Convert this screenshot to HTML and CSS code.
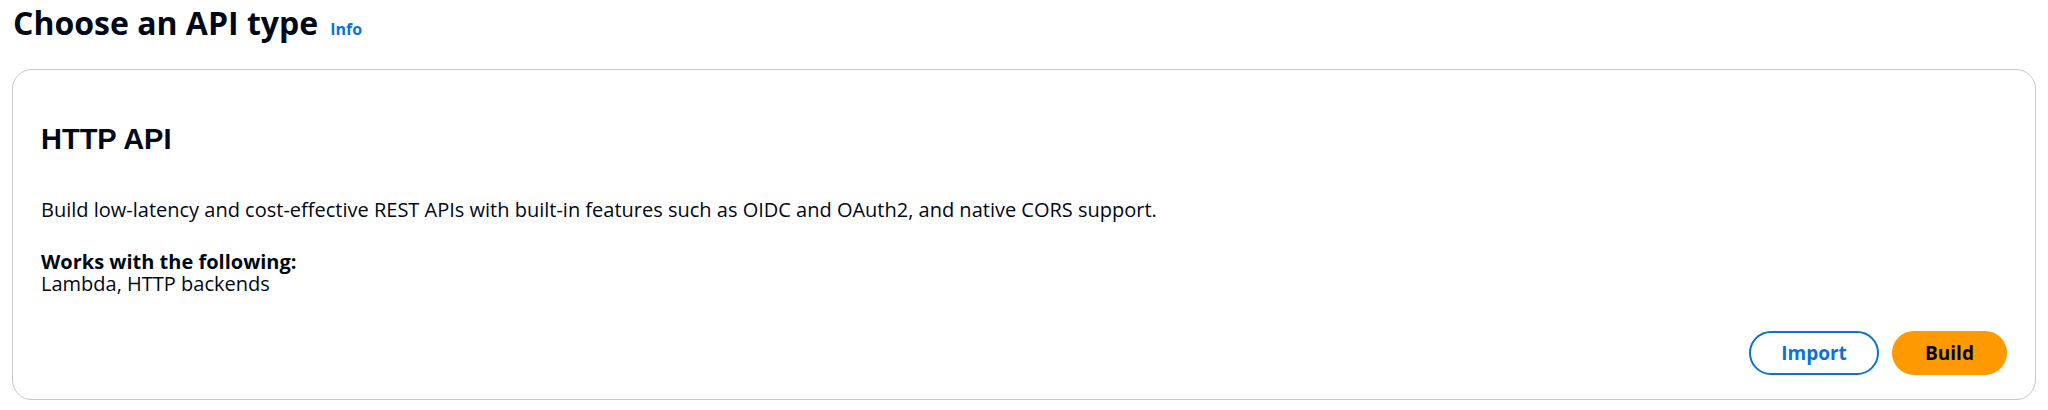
FILE: index.html
```html
<!DOCTYPE html>
<html lang="en">
<head>
<meta charset="utf-8">
<title>Choose an API type</title>
<link rel="stylesheet" href="styles.css">
</head>
<body>
<main class="page">
  <header class="page-header">
    <h1 class="page-title">Choose an API type</h1>
    <a class="info-link" href="#">Info</a>
  </header>
  <section class="card">
    <h2 class="card-title">HTTP API</h2>
    <p class="card-desc">Build low-latency and cost-effective REST APIs with built-in features such as OIDC and OAuth2, and native CORS support.</p>
    <div class="works">
      <div class="works-label">Works with the following:</div>
      <div class="works-value">Lambda, HTTP backends</div>
    </div>
    <div class="actions">
      <button class="btn btn-normal" type="button">Import</button>
      <button class="btn btn-primary" type="button">Build</button>
    </div>
  </section>
</main>
</body>
</html>
```

FILE: styles.css
```css
html, body {
  margin: 0;
  padding: 0;
  background: #ffffff;
}

body {
  font-family: "Open Sans", "Noto Sans", sans-serif;
  color: #000716;
  width: 2048px;
  height: 410px;
  overflow: hidden;
}

.page {
  padding: 3px 12px 0 12px;
  display: flex;
  flex-direction: column;
}

.page-header {
  display: flex;
  align-items: baseline;
  gap: 12px;
  height: 40px;
  padding-left: 1px;
}

.page-title {
  margin: 0;
  font-size: 32px;
  line-height: 40px;
  font-weight: 700;
}

.info-link {
  font-size: 16px;
  font-weight: 700;
  color: #0972d3;
  text-decoration: none;
}

.card {
  margin-top: 26px;
  border: 1px solid #c6c6cd;
  border-radius: 20px;
  padding: 51px 28px 24px 28px;
  display: flex;
  flex-direction: column;
  height: 331px;
  box-sizing: border-box;
}

.card-title {
  margin: 0;
  font-family: "Liberation Sans", Arial, sans-serif;
  font-size: 29px;
  line-height: 36px;
  font-weight: 700;
}

.card-desc {
  margin: 42px 0 0 0;
  font-size: 20px;
  line-height: 22px;
}

.works {
  margin-top: 30px;
  font-size: 20px;
  line-height: 22px;
}

.works-label {
  font-weight: 700;
}

.actions {
  margin-top: auto;
  display: flex;
  justify-content: flex-end;
  gap: 13px;
}

.btn {
  height: 44px;
  border-radius: 22px;
  font-family: "Open Sans", "Noto Sans", sans-serif;
  font-size: 19px;
  font-weight: 700;
  cursor: pointer;
  box-sizing: border-box;
}

.btn-normal {
  width: 130px;
  background: #ffffff;
  color: #0972d3;
  border: 2px solid #0972d3;
}

.btn-primary {
  width: 115px;
  background: #ff9900;
  color: #000716;
  border: 2px solid #ff9900;
}
```
